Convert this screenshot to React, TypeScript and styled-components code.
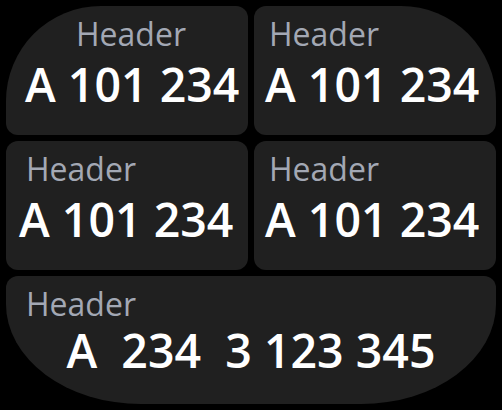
import React from "react";
import styled, { createGlobalStyle } from "styled-components";

const GlobalStyle = createGlobalStyle`
  html, body {
    margin: 0;
    padding: 0;
    background: #000;
  }
  body {
    font-family: "Open Sans", "Noto Sans", sans-serif;
  }
`;

const Screen = styled.div`
  width: 502px;
  height: 410px;
  box-sizing: border-box;
  padding: 6px;
  display: grid;
  grid-template-columns: 1fr 1fr;
  grid-template-rows: 129px 129px 128px;
  gap: 6px;
  background: #000;
  overflow: hidden;
`;

type Corner = "topLeft" | "topRight" | "bottom" | "plain";

const radii: Record<Corner, string> = {
  topLeft: "95px 12px 12px 12px",
  topRight: "12px 95px 12px 12px",
  bottom: "12px 12px 135px 135px / 12px 12px 100px 100px",
  plain: "12px",
};

const Tile = styled.div<{ $corner: Corner; $wide?: boolean }>`
  grid-column: ${(p) => (p.$wide ? "1 / span 2" : "auto")};
  background: #202020;
  border-radius: ${(p) => radii[p.$corner]};
  box-sizing: border-box;
  padding-top: 12px;
  display: flex;
  flex-direction: column;
  overflow: hidden;
  min-width: 0;
`;

const Label = styled.div<{ $indent: number }>`
  font-size: 32px;
  line-height: 32px;
  font-weight: 400;
  color: #a3a8b4;
  padding-left: ${(p) => p.$indent}px;
  white-space: nowrap;
`;

const Value = styled.div<{ $indent?: number; $centered?: boolean; $gap: number }>`
  margin-top: ${(p) => p.$gap}px;
  font-size: 46.5px;
  line-height: 47px;
  font-weight: 600;
  color: #ffffff;
  white-space: pre;
  padding-left: ${(p) => (p.$centered ? 0 : p.$indent ?? 0)}px;
  text-align: ${(p) => (p.$centered ? "center" : "left")};
`;

type Field = {
  corner: Corner;
  label: string;
  value: string;
  labelIndent: number;
  valueIndent?: number;
  centered?: boolean;
  wide?: boolean;
  gap: number;
};

const fields: Field[] = [
  { corner: "topLeft", label: "Header", value: "A 101 234", labelIndent: 70, valueIndent: 19, gap: 11 },
  { corner: "topRight", label: "Header", value: "A 101 234", labelIndent: 15, valueIndent: 11, gap: 11 },
  { corner: "plain", label: "Header", value: "A 101 234", labelIndent: 20, valueIndent: 13, gap: 11 },
  { corner: "plain", label: "Header", value: "A 101 234", labelIndent: 15, valueIndent: 11, gap: 11 },
  { corner: "bottom", label: "Header", value: "A  234  3 123 345", labelIndent: 20, centered: true, wide: true, gap: 7 },
];

export default function App() {
  return (
    <>
      <GlobalStyle />
      <Screen>
        {fields.map((f, i) => (
          <Tile key={i} $corner={f.corner} $wide={f.wide}>
            <Label $indent={f.labelIndent}>{f.label}</Label>
            <Value $indent={f.valueIndent} $centered={f.centered} $gap={f.gap}>
              {f.value}
            </Value>
          </Tile>
        ))}
      </Screen>
    </>
  );
}
